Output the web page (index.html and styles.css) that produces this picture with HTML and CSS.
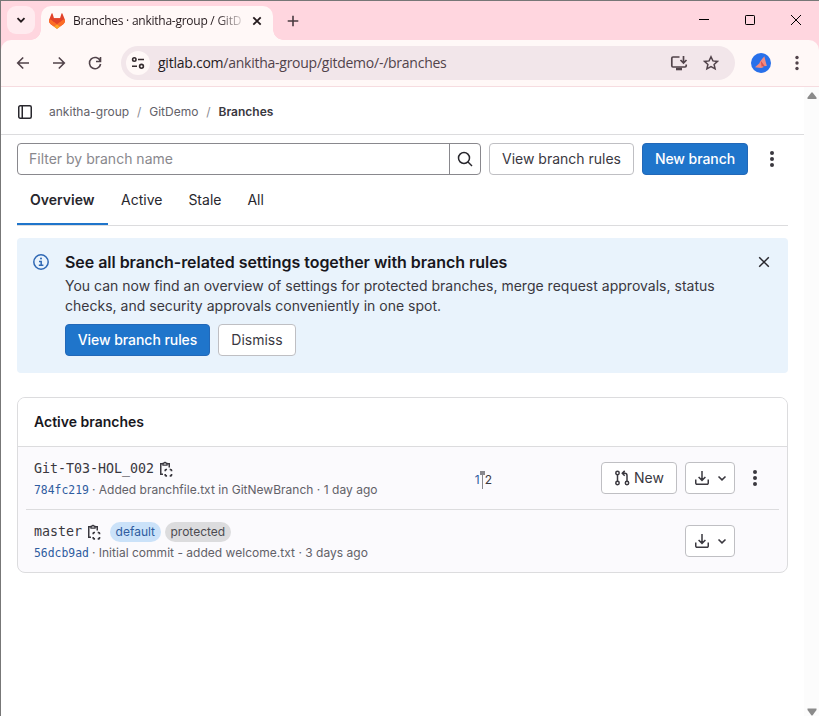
FILE: index.html
```html
<!DOCTYPE html>
<html lang="en">
<head>
<meta charset="utf-8">
<title>Branches · ankitha-group / GitDemo</title>
<link rel="stylesheet" href="styles.css">
</head>
<body>
<svg class="defs" aria-hidden="true">
  <symbol id="kebab" viewBox="0 0 16 16"><circle cx="8" cy="2" r="2"/><circle cx="8" cy="8" r="2"/><circle cx="8" cy="14" r="2"/></symbol>
  <symbol id="copy" viewBox="0 0 16 16"><g fill="none" stroke="currentColor" stroke-width="1.500"><path d="M5 2.750H2.750v10.500H5M9 2.750h2.250V6.500"/><path d="M5 4.200V2.300h.8a1.250 1.250 0 0 1 2.400 0H9v1.900z" stroke-width="1.300"/><path d="M7.250 10.300V9.200a.700.700 0 0 1 .7-.7h1.100M11.700 8.500h1.100a.700.700 0 0 1 .7.700v1.100M13.500 13v1.100a.700.700 0 0 1-.7.700h-1.100M9.050 14.800h-1.100a.700.700 0 0 1-.7-.7V13" stroke-width="1.700"/></g></symbol>
  <symbol id="download" viewBox="0 0 16 16"><path d="M1.750 9.500v3.500a1.250 1.250 0 0 0 1.250 1.250h10a1.250 1.250 0 0 0 1.250-1.250V9.500M8 1v9.200M4.600 7 8 10.400 11.400 7" fill="none" stroke="currentColor" stroke-width="1.500"/></symbol>
  <symbol id="chevron" viewBox="0 0 16 16"><path d="m4.500 6.500 3.500 3.300 3.500-3.300" fill="none" stroke="currentColor" stroke-width="1.600"/></symbol>
</svg>
<div class="window">
  <header class="tabstrip">
    <button class="tab-search" aria-label="Search tabs"><svg width="16" height="16" viewBox="0 0 16 16"><path d="m4.500 6.200 3.500 3.500 3.500-3.500" fill="none" stroke="#241a1d" stroke-width="1.800"/></svg></button>
    <div class="tab">
      <svg class="fox" width="16" height="16" viewBox="0 0 16 16">
        <path fill="#e24329" d="m15.700 6.300-2.300-5.800a.500.500 0 0 0-.9.100L11 5.200H5L3.500.600a.500.500 0 0 0-.9-.1L.300 6.300A4.300 4.300 0 0 0 1.800 11.200L8 15.800l6.200-4.600a4.300 4.300 0 0 0 1.500-4.900z"/>
        <path fill="#fc6d26" d="M15.700 6.300A7.500 7.500 0 0 0 12.800 7.600L8 11.200l6.200 0a4.300 4.300 0 0 0 1.500-4.900zM.300 6.300A7.500 7.500 0 0 1 3.200 7.600L8 11.200H1.800A4.300 4.300 0 0 1 .300 6.300z"/>
        <path fill="#fc6d26" d="M1.800 11.200 4.900 13.500 8 11.200 11.100 13.500l3.100-2.300L11 9H5z"/>
        <path fill="#fca326" d="m4.900 13.500 2.500 1.900a1 1 0 0 0 1.200 0l2.500-1.900L8 11.200z"/>
        <path fill="#e24329" d="M3.200 7.600 8 11.200l4.800-3.600L11 5.200H5z"/>
      </svg>
      <span class="tab-title">Branches · ankitha-group / GitD</span>
      <svg class="tab-close" width="10" height="10" viewBox="0 0 10 10"><path d="m1.300 1.300 7.400 7.400m0-7.400L1.300 8.700" stroke="#241a1d" stroke-width="1.800"/></svg>
    </div>
    <svg class="newtab" width="12" height="12" viewBox="0 0 12 12"><path d="M6 .700v10.600M.700 6h10.600" stroke="#493b40" stroke-width="1.600"/></svg>
    <div class="controls">
      <svg width="10" height="10" viewBox="0 0 10 10"><path d="M0 4.500h10" stroke="#000"/></svg>
      <svg width="10" height="10" viewBox="0 0 10 10"><rect x=".5" y=".5" width="9" height="9" rx=".7" fill="none" stroke="#000"/></svg>
      <svg width="10" height="10" viewBox="0 0 10 10"><path d="m0 0 10 10M10 0 0 10" stroke="#000"/></svg>
    </div>
  </header>
  <nav class="toolbar">
    <svg class="nav-icon" width="16" height="16" viewBox="0 0 16 16"><path d="M14 8H3m5.200-5.500L2.700 8l5.500 5.500"/></svg>
    <svg class="nav-icon" width="16" height="16" viewBox="0 0 16 16"><path d="M2 8h11M7.800 2.500 13.300 8l-5.500 5.500"/></svg>
    <svg class="nav-icon" width="16" height="16" viewBox="0 0 16 16"><path d="M13.200 5.800A5.600 5.600 0 1 0 13.600 9M13.500 2v4.500H9"/></svg>
    <div class="omnibox">
      <span class="site-info"><svg width="14" height="14" viewBox="0 0 14 14" fill="none" stroke="#342a2d" stroke-width="1.600"><circle cx="3.300" cy="3.500" r="1.700"/><path d="M7 3.500h6M1 10.300h5"/><circle cx="10.500" cy="10.300" r="1.900"/></svg></span>
      <span class="url"><b>gitlab.com</b>/ankitha-group/gitdemo/-/branches</span>
      <svg class="install" width="18" height="16" viewBox="0 0 18 16" fill="none" stroke="#51434a" stroke-width="1.700"><path d="M9.500 2H3a1.200 1.200 0 0 0-1.200 1.200v7.600A1.200 1.200 0 0 0 3 12h12a1.200 1.200 0 0 0 1.200-1.200V9.500M13.500 1v6.500M10.500 5l3 3 3-3"/><path d="M6 14h6" stroke-width="2.600"/></svg>
      <svg width="16" height="16" viewBox="0 0 16 16"><path d="m8 1.800 1.900 4.100 4.600.5-3.400 3 1 4.500L8 11.600l-4.100 2.300 1-4.500-3.400-3 4.600-.5z" fill="none" stroke="#51434a" stroke-width="1.500"/></svg>
    </div>
    <svg class="avatar" width="20" height="20" viewBox="0 0 20 20"><circle cx="10" cy="10" r="10" fill="#2870ea"/><path fill="#f28b82" d="M13.300 3.200 8.600 9.300l1.500 4.100 5.700-.3z"/><path fill="#f28b82" d="m4 14.300 6.100-5.500 2.400 5.400-2.500.8z"/><path fill="#d9534f" d="m9.700 7.800 4 5.100-3.100.6z"/></svg>
    <svg class="browser-menu" width="4" height="16" viewBox="0 0 4 16"><circle cx="2" cy="2.500" r="1.700"/><circle cx="2" cy="8" r="1.700"/><circle cx="2" cy="13.500" r="1.700"/></svg>
  </nav>
  <div class="viewport">
    <div class="page">
      <div class="crumbs">
        <svg width="16" height="16" viewBox="0 0 16 16" fill="none" stroke="#28272d" stroke-width="1.500"><rect x="1.750" y="1.750" width="12.500" height="12.500" rx="1.500"/><path d="M5.250 2v12"/></svg>
        <span class="crumb first">ankitha-group</span><i>/</i><span class="crumb">GitDemo</span><i>/</i><strong>Branches</strong>
      </div>
      <main>
        <div class="filters">
          <div class="search">
            <span class="placeholder">Filter by branch name</span>
            <span class="search-button"><svg width="16" height="16" viewBox="0 0 16 16" fill="none" stroke="#28272d" stroke-width="1.500"><circle cx="7" cy="7" r="5.500"/><path d="m11 11 4 4"/></svg></span>
          </div>
          <button class="btn rules">View branch rules</button>
          <button class="btn primary new-branch">New branch</button>
          <svg class="kebab" width="16" height="16"><use href="#kebab"/></svg>
        </div>
        <div class="tabs"><span class="active">Overview</span><span>Active</span><span>Stale</span><span>All</span></div>
        <section class="alert">
          <svg width="16" height="16" viewBox="0 0 16 16"><circle cx="8" cy="8" r="7.200" fill="none" stroke="#2f68b4" stroke-width="1.500"/><circle cx="8" cy="4.600" r="1" fill="#2f68b4"/><path d="M6 7.500h2.200v3.700M5.800 11.200h4.600" fill="none" stroke="#2f68b4" stroke-width="1.500"/></svg>
          <div class="alert-body">
            <h2>See all branch-related settings together with branch rules</h2>
            <p>You can now find an overview of settings for protected branches, merge request approvals, status<br>checks, and security approvals conveniently in one spot.</p>
            <div class="actions"><button class="btn primary view">View branch rules</button><button class="btn dismiss">Dismiss</button></div>
          </div>
          <svg class="close" width="16" height="16" viewBox="0 0 16 16"><path d="m3.200 3.200 9.600 9.600m0-9.600-9.600 9.600" stroke="#28272d" stroke-width="1.500"/></svg>
        </section>
        <section class="card">
          <h3>Active branches</h3>
          <ul>
            <li>
              <div class="info">
                <div class="name"><code>Git-T03-HOL_002</code><svg width="16" height="16"><use href="#copy"/></svg></div>
                <div class="commit"><a>784fc219</a><span>· Added branchfile.txt in GitNewBranch · 1 day ago</span></div>
              </div>
              <div class="divergence"><span class="behind">1</span><span class="axis"></span><span>2</span></div>
              <button class="btn new"><svg width="16" height="16" viewBox="0 0 16 16" fill="none" stroke="currentColor" stroke-width="1.500"><circle cx="3.500" cy="3" r="1.700"/><circle cx="3.500" cy="13" r="1.700"/><circle cx="13" cy="13" r="1.700"/><path d="M3.500 4.700v6.600M13 11.300V5.500A2.200 2.200 0 0 0 10.800 3.300H8.500M10.700.9 8.300 3.300l2.400 2.400"/></svg>New</button>
              <button class="btn dl"><svg width="16" height="16"><use href="#download"/></svg><svg width="16" height="16"><use href="#chevron"/></svg></button>
              <svg class="kebab" width="16" height="16"><use href="#kebab"/></svg>
            </li>
            <li>
              <div class="info">
                <div class="name"><code>master</code><svg width="16" height="16"><use href="#copy"/></svg><span class="badge blue">default</span><span class="badge gray">protected</span></div>
                <div class="commit"><a>56dcb9ad</a><span>· Initial commit - added welcome.txt · 3 days ago</span></div>
              </div>
              <button class="btn dl"><svg width="16" height="16"><use href="#download"/></svg><svg width="16" height="16"><use href="#chevron"/></svg></button>
              <span class="kebab-space"></span>
            </li>
          </ul>
        </section>
      </main>
    </div>
    <div class="scrollbar"><svg width="10" height="8" viewBox="0 0 10 8"><path d="M4.200.800a1 1 0 0 1 1.600 0L9.500 5.500V7h-9V5.500z"/></svg><svg width="10" height="8" viewBox="0 0 10 8"><path d="M.5.500h9V2L5.800 7a1 1 0 0 1-1.600 0L.5 2z"/></svg></div>
  </div>
</div>
</body>
</html>
```
FILE: styles.css
```css
* { box-sizing: border-box; }
body { margin: 0; width: 819px; height: 716px; overflow: hidden; background: #fff; color: #3a383f; font: 14px/20px Inter, "Liberation Sans", sans-serif; }
.defs { position: absolute; width: 0; height: 0; }
svg { display: block; flex: none; }
button { font: inherit; color: inherit; }
.window { display: flex; flex-direction: column; height: 716px; border-top: 1px solid #777; border-left: 1px solid #777; background: #ffd6df; }

.tabstrip { display: flex; height: 39px; align-items: center; font-family: "Open Sans", "Noto Sans", sans-serif; }
.tab-search { width: 28px; height: 28px; margin: -1px 0 0 6px; padding: 6px; border: 0; border-radius: 9px; background: #ffebef; }
.tab { position: relative; display: flex; align-items: center; align-self: flex-end; width: 232px; height: 34px; margin-left: 6px; padding: 0 11px 4px 8px; border-radius: 10px 10px 0 0; background: #fff8f7; }
.tab::before, .tab::after { content: ""; position: absolute; bottom: 0; width: 10px; height: 10px; }
.tab::before { left: -10px; background: radial-gradient(circle at 0 0, transparent 9.500px, #fff8f7 10px); }
.tab::after { right: -10px; background: radial-gradient(circle at 100% 0, transparent 9.500px, #fff8f7 10px); }
.tab-title { width: 168px; margin: 0 11px 0 8px; white-space: nowrap; color: #241a1d; font-size: 12px; letter-spacing: -.25px; -webkit-mask-image: linear-gradient(90deg, #000 143px, transparent 174px); mask-image: linear-gradient(90deg, #000 143px, transparent 174px); }
.newtab { margin-left: 14px; }
.controls { display: flex; gap: 36px; margin: -1px 18px 0 auto; }

.toolbar { display: flex; align-items: center; height: 47px; flex: none; border-bottom: 1px solid #f6dce0; border-radius: 10px 10px 0 0; background: #fff8f7; padding: 0 20px 0 14px; }
.nav-icon { margin-right: 20px; fill: none; stroke: #51434a; stroke-width: 1.600; }
.omnibox { display: flex; align-items: center; width: 614px; height: 34px; margin-left: -2px; padding: 0 16px 0 5px; border-radius: 17px; background: #f2e6ea; font: 14px/20px "Open Sans", "Noto Sans", sans-serif; }
.site-info { display: grid; place-items: center; width: 24px; height: 24px; border-radius: 50%; background: #fff8f7; }
.url { margin-left: 8px; margin-right: auto; color: #51434a; white-space: nowrap; letter-spacing: -.25px; }
.url b { font-weight: 400; color: #241a1d; }
.install { margin-right: 15px; }
.avatar { margin-left: 16px; }
.browser-menu { margin-left: 24px; fill: #51434a; }

.viewport { display: flex; flex: 1; background: #fff; }
.page { width: 803px; }
.scrollbar { display: flex; flex-direction: column; justify-content: space-between; align-items: center; width: 15px; padding: 5px 0 0; background: #fcfcfc; fill: #8b8b8b; }
.crumbs { display: flex; align-items: center; height: 48px; padding: 2px 16px 0; border-bottom: 1px solid #dcdcde; color: #626168; font-size: 12px; letter-spacing: .02px; }
.crumbs i { width: 20px; text-align: center; font-style: normal; color: #8b8a91; }
.crumbs strong { color: #3a383f; font-weight: 600; }
.crumb.first { margin-left: 16px; }
main { padding: 8px 16px; }
.filters { display: flex; align-items: center; gap: 8px; }
.search { display: flex; width: 464px; height: 32px; border: 1px solid #89888d; border-radius: 4px; }
.placeholder { flex: 1; padding: 5px 11px; color: #89888d; }
.search-button { display: grid; place-items: center; width: 31px; border-left: 1px solid #89888d; }
.btn { display: inline-flex; align-items: center; justify-content: center; height: 32px; padding: 0; border: 1px solid #bfbfc3; border-radius: 4px; background: #fff; white-space: nowrap; }
.btn.primary { border-color: #2268b8; background: #1f75cb; color: #fff; font-weight: 500; letter-spacing: -.06px; }
.rules, .view { width: 145px; }
.new-branch { width: 106px; }
.kebab { fill: #3a383f; }
.filters .kebab { margin-left: 8px; }
.tabs { display: flex; height: 51px; border-bottom: 1px solid #dcdcde; color: #28272d; }
.tabs span { height: 50px; padding: 15px 13px 0; }
.tabs .active { width: 91px; border-bottom: 2px solid #1f75cb; font-weight: 600; }
.alert { display: flex; height: 135px; margin-top: 12px; padding: 16px; border-radius: 4px; background: #e9f3fc; }
.alert-body { margin: -2px 0 0 16px; }
.alert h2 { margin: 0; color: #18171d; font-size: 16px; line-height: 20px; font-weight: 600; letter-spacing: -.035px; }
.alert p { margin: 4px 0 8px; letter-spacing: .01px; }
.actions { display: flex; gap: 8px; }
.dismiss { width: 78px; }
.close { margin-left: auto; }
.card { margin-top: 24px; height: 176px; border: 1px solid #dcdcde; border-radius: 8px; background: #fbfafd; overflow: hidden; }
.card h3 { height: 49px; margin: 0; padding: 14px 16px; border-bottom: 1px solid #dcdcde; background: #fff; color: #18171d; font-size: 14px; line-height: 20px; font-weight: 600; }
.card ul { margin: 0 8px; padding: 0; list-style: none; }
.card li { display: flex; align-items: center; height: 62px; padding: 0 16px 0 8px; }
.card li + li { height: 63px; border-top: 1px solid #dcdcde; }
.info { width: 430px; margin: 2px auto 0 0; }
.name { display: flex; align-items: center; height: 20px; }
.name svg { margin-top: -1px; }
code { font: 13.300px/20px "DejaVu Sans Mono", monospace; color: #3a383f; margin-right: 4px; }
.commit { display: flex; margin-top: 2px; color: #626168; font-size: 12px; line-height: 18px; letter-spacing: .02px; white-space: nowrap; }
.commit a { color: #2f5ca0; font: 11.400px/18px "DejaVu Sans Mono", monospace; letter-spacing: 0; margin-right: 3px; }
.badge { height: 20px; padding: 0 6px; border-radius: 10px; font-size: 12px; line-height: 20px; }
.blue { margin: 0 4px 0 8px; padding: 0 5.500px; background: #cbe2f9; color: #2f5ca0; }
.gray { background: #dcdcde; color: #4c4b51; }
.divergence { display: flex; align-items: center; margin: 4px 109px 0 0; font-size: 12px; }
.behind { color: #2f5ca0; }
.axis { position: relative; width: 1px; height: 18px; margin: 0 2px 0 2px; background: #89888d; }
.axis::before { content: ""; position: absolute; left: -2px; top: 0; width: 5px; height: 4px; background: #89888d; }
.new { width: 76px; gap: 4px; margin-right: 8px; }
.dl { width: 50px; gap: 4px; margin-right: 12px; padding-left: 4px; }
.kebab-space { width: 16px; }
```
